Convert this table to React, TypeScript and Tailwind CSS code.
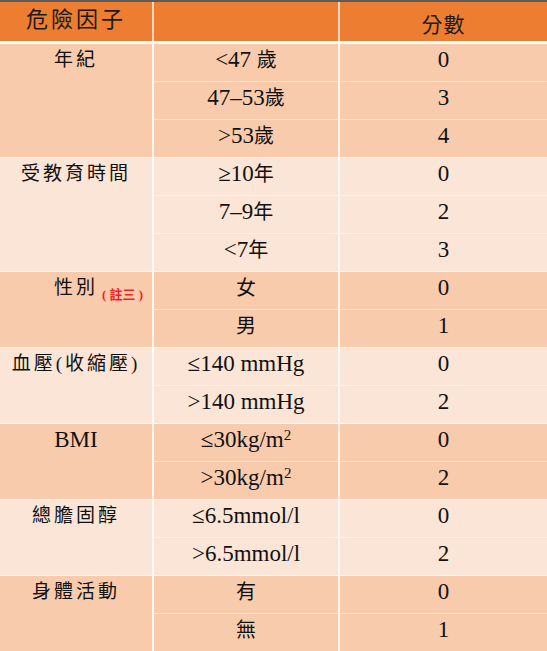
import React from "react";

type Group = {
  label: React.ReactNode;
  dark: boolean;
  rows: [React.ReactNode, string][];
};

const C = ({ children }: { children: React.ReactNode }) => (
  <span className="text-[20px]">{children}</span>
);

const Sup = () => <span className="relative -top-[7px] text-[15px] leading-none">2</span>;

const groups: Group[] = [
  {
    label: "年紀",
    dark: true,
    rows: [
      [<span>&lt;47 <C>歲</C></span>, "0"],
      [<span>47–53<C>歲</C></span>, "3"],
      [<span>&gt;53<C>歲</C></span>, "4"],
    ],
  },
  {
    label: "受教育時間",
    dark: false,
    rows: [
      [<span>≥10<C>年</C></span>, "0"],
      [<span>7–9<C>年</C></span>, "2"],
      [<span>&lt;7<C>年</C></span>, "3"],
    ],
  },
  {
    label: (
      <span className="relative self-start">
        性別
        <span className="absolute left-full bottom-[2px] ml-[4px] whitespace-pre text-[13px] font-bold leading-none tracking-normal text-[#ff1a1a]">
          (&nbsp;註三&nbsp;)
        </span>
      </span>
    ),
    dark: true,
    rows: [
      [<C>女</C>, "0"],
      [<C>男</C>, "1"],
    ],
  },
  { label: "血壓(收縮壓)", dark: false, rows: [["≤140 mmHg", "0"], [">140 mmHg", "2"]] },
  {
    label: <span className="tracking-normal text-[23px]">BMI</span>,
    dark: true,
    rows: [
      [<span>≤30kg/m<Sup /></span>, "0"],
      [<span>&gt;30kg/m<Sup /></span>, "2"],
    ],
  },
  { label: "總膽固醇", dark: false, rows: [["≤6.5mmol/l", "0"], [">6.5mmol/l", "2"]] },
  {
    label: "身體活動",
    dark: true,
    rows: [
      [<C>有</C>, "0"],
      [<C>無</C>, "1"],
    ],
  },
];

const FONT = "font-['Liberation_Serif','Noto_Sans_CJK_TC',serif]";

export default function App() {
  let rowIndex = 0;
  const cells: React.ReactNode[] = [];
  groups.forEach((g, gi) => {
    const bg = g.dark ? "bg-[#F8CBAD]" : "bg-[#FBE5D6]";
    const start = rowIndex + 1;
    cells.push(
      <div
        key={`l${gi}`}
        className={`${bg} border-r-2 border-b border-r-white/80 border-b-white/80 flex items-start justify-center pt-[1px] text-[19px] leading-[30px] tracking-[3px] text-[#111]`}
        style={{ gridColumn: 1, gridRow: `${start} / span ${g.rows.length}` }}
      >
        {g.label}
      </div>
    );
    g.rows.forEach(([range, score], ri) => {
      const last = ri === g.rows.length - 1;
      const line = last ? "border-b-white/80" : "border-b-white/50";
      cells.push(
        <div
          key={`r${gi}-${ri}`}
          className={`${bg} border-r-2 border-b border-r-white/80 ${line} flex items-start justify-center pt-[1px] text-[23px] leading-[30px] text-[#111]`}
          style={{ gridColumn: 2, gridRow: rowIndex + 1 }}
        >
          {range}
        </div>
      );
      cells.push(
        <div
          key={`s${gi}-${ri}`}
          className={`${bg} border-b ${line} flex items-start justify-center pt-[1px] text-[23px] leading-[30px] text-[#111]`}
          style={{ gridColumn: 3, gridRow: rowIndex + 1 }}
        >
          {score}
        </div>
      );
      rowIndex++;
    });
  });

  return (
    <div className={`w-[547px] h-[651px] overflow-hidden bg-white ${FONT}`}>
      <div className="border-t-2 border-[#5c5c5c]">
        <div className="grid grid-cols-[154px_186px_207px] h-[42px] border-b-[3px] border-white bg-[#ED7D31]">
          <div className="border-r-2 border-white/70 flex justify-center pt-[3px] text-[22px] leading-[30px] tracking-[3px] text-[#1a1a1a]">
            危險因子
          </div>
          <div className="border-r-2 border-white/70" />
          <div className="flex justify-center pt-[8px] text-[21px] leading-[30px] tracking-[1px] text-[#1a1a1a]">
            分數
          </div>
        </div>
        <div className="grid grid-cols-[154px_186px_207px] auto-rows-[38px]">{cells}</div>
      </div>
    </div>
  );
}
